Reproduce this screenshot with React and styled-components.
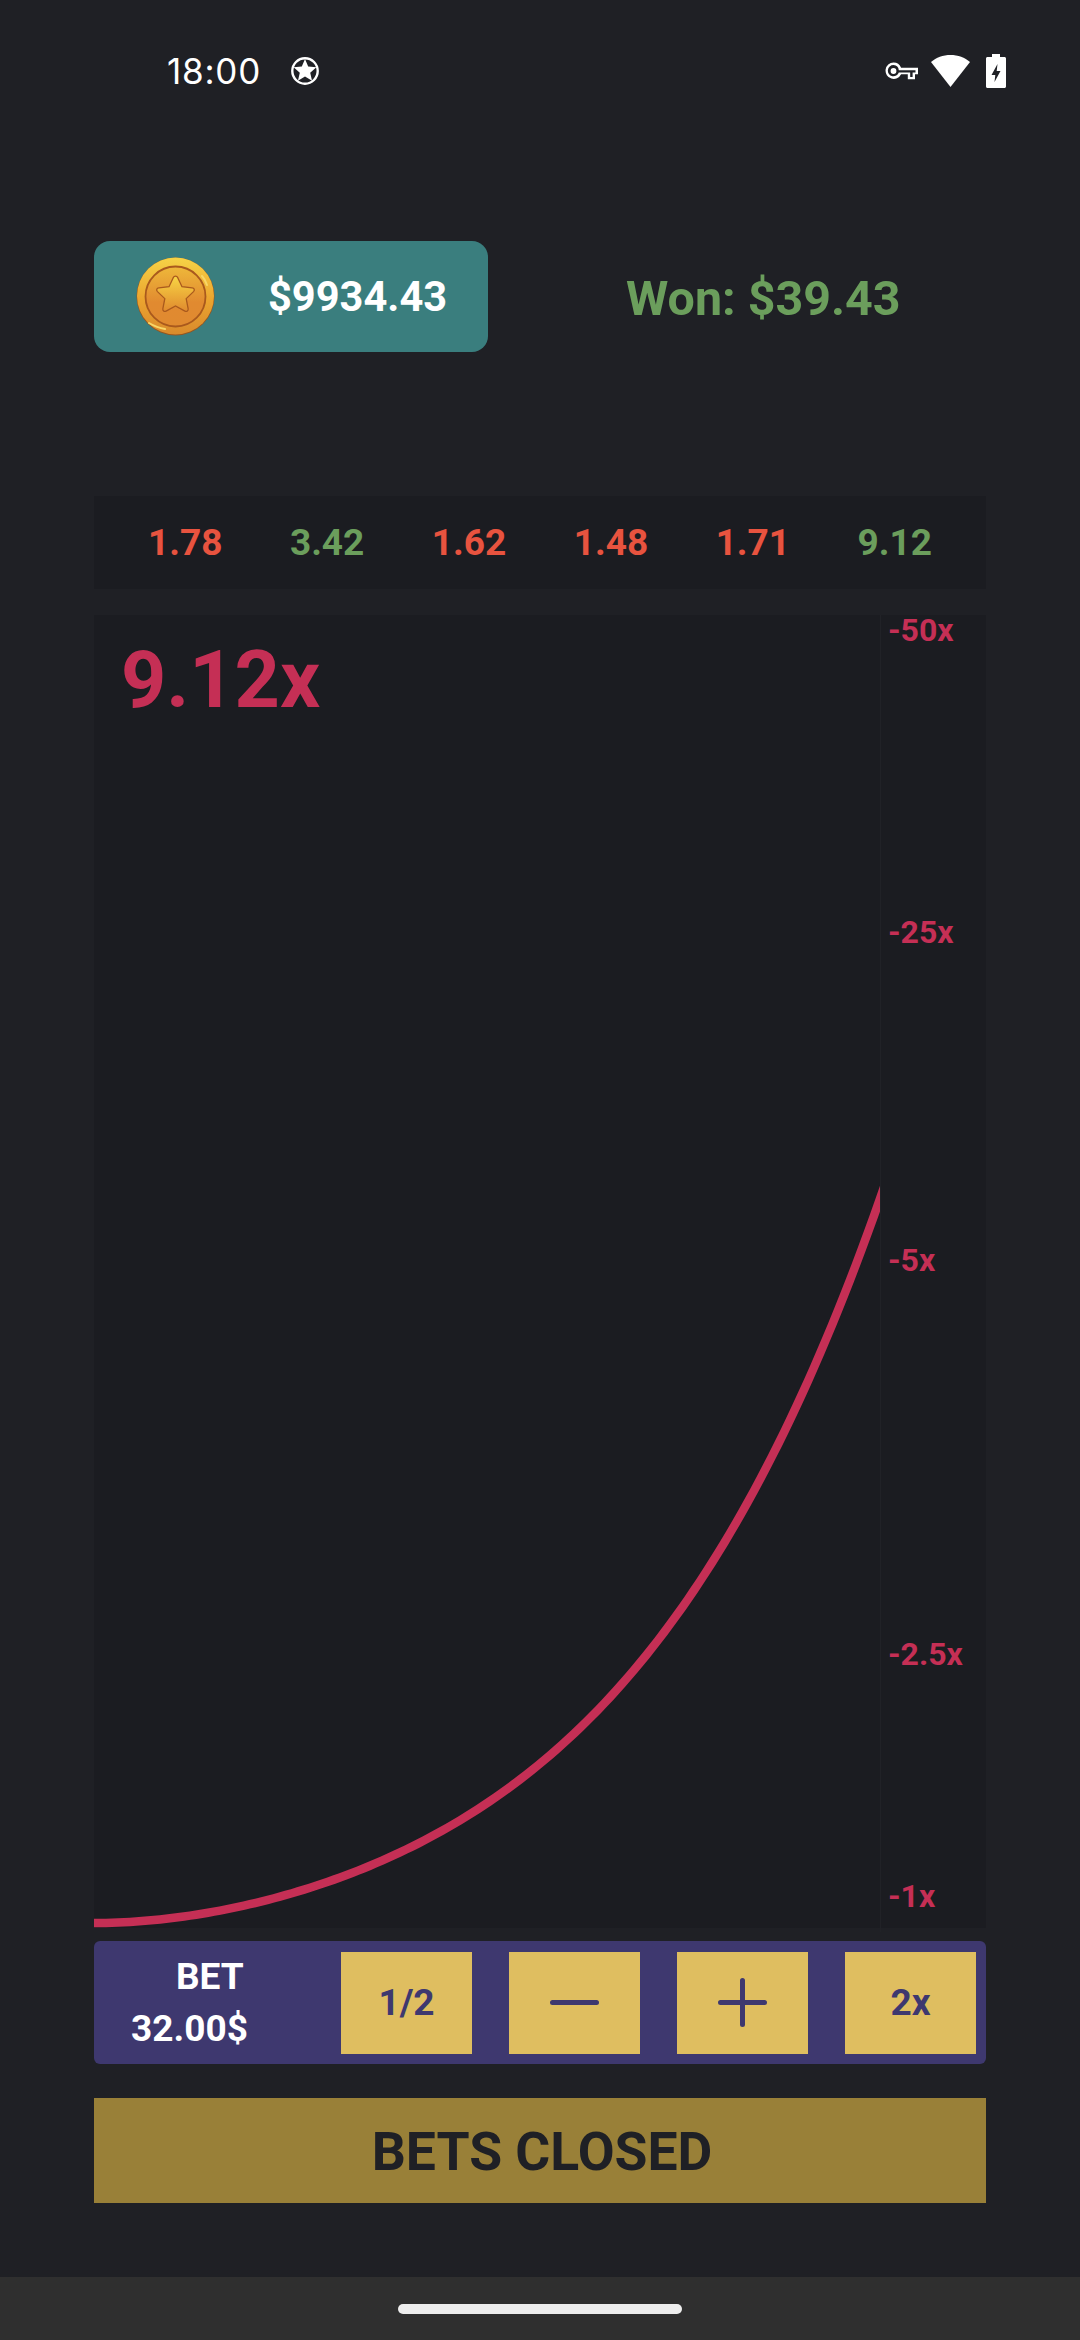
import React from 'react'
import styled, { createGlobalStyle } from 'styled-components'

const GlobalStyle = createGlobalStyle`
  html, body { margin: 0; padding: 0; height: 2340px; overflow: hidden; background: #1f2025; }
  * { box-sizing: border-box; }
`

const Page = styled.div`
  width: 1080px;
  height: 2340px;
  overflow: hidden;
  display: flex;
  flex-direction: column;
  background: #1f2025;
  font-family: Roboto, "Liberation Sans", sans-serif;
`
const StatusBar = styled.div`
  height: 142px;
  display: flex;
  align-items: center;
  padding: 0 74px 0 167px;
  color: #fff;
`
const Time = styled.span`
  font-family: Inter, Roboto, sans-serif;
  font-size: 35px;
  letter-spacing: 0.8px;
  margin-right: 30px;
`
const StatusIcons = styled.div`
  margin-left: auto;
  display: flex;
  align-items: center;
  gap: 13px;

  svg:last-child {
    margin-left: 3px;
  }
`
const Content = styled.div`
  flex: 1;
  display: flex;
  flex-direction: column;
  padding: 0 94px;
`
const TopRow = styled.div`
  margin-top: 99px;
  display: flex;
  align-items: center;
`
const Wallet = styled.div`
  width: 394px;
  height: 111px;
  border-radius: 16px;
  background: #3a7e7e;
  display: flex;
  align-items: center;
  padding-left: 42px;
  color: #fff;
  font-size: 41.6px;
  font-weight: 700;
`
const Balance = styled.span`
  margin-left: 53px;
`
const Won = styled.div`
  margin: 4px 0 0 138px;
  color: #6b9e5c;
  font-size: 48.4px;
  font-weight: 700;
`
const Ticker = styled.div`
  margin-top: 144px;
  height: 93px;
  background: #1b1c21;
  display: flex;
  align-items: center;
  justify-content: space-between;
  padding: 0 54px;
`
const Round = styled.span`
  font-size: 37px;
  font-weight: 700;
  color: ${props => (props.$won ? '#6b9e5c' : '#e8533f')};
`
const Chart = styled.div`
  margin-top: 26px;
  height: 1313px;
  background: #1b1c21;
  display: grid;
  grid-template-columns: 787px 1fr;
`
const Plot = styled.div`
  position: relative;
  border-right: 1px solid #212227;
`
const Multiplier = styled.div`
  position: absolute;
  top: 19px;
  left: 27px;
  font-size: 79px;
  font-weight: 700;
  color: #c52f55;
`
const Axis = styled.div`
  position: relative;
`
const Tick = styled.span`
  position: absolute;
  left: 7px;
  top: ${props => props.$y}px;
  transform: translateY(-50%);
  font-size: 32px;
  font-weight: 700;
  color: #c52f55;
`
const BetBar = styled.div`
  margin-top: 13px;
  height: 123px;
  border-radius: 6px;
  background: #3e386f;
  display: flex;
  align-items: center;
  padding-right: 10px;
`
const BetInfo = styled.div`
  width: 247px;
  padding-left: 37px;
  display: flex;
  flex-direction: column;
  color: #fff;
  font-size: 37px;
  font-weight: 700;
  line-height: 52px;
`
const BetLabel = styled.span`
  margin-left: 45px;
`
const BetButtons = styled.div`
  flex: 1;
  display: flex;
  justify-content: space-between;
`
const BetButton = styled.div`
  width: 131px;
  height: 102px;
  background: #dfbe60;
  color: #3e386f;
  font-size: 37px;
  font-weight: 700;
  display: flex;
  align-items: center;
  justify-content: center;
`
const ClosedButton = styled.div`
  margin-top: 34px;
  height: 105px;
  padding: 2px 0 0 4px;
  background: #998038;
  color: #1f2025;
  font-size: 53.5px;
  font-weight: 700;
  display: flex;
  align-items: center;
  justify-content: center;
`
const NavBar = styled.div`
  height: 63px;
  background: #2f2f2f;
  display: flex;
  align-items: center;
  justify-content: center;
`
const NavPill = styled.div`
  width: 284px;
  height: 10px;
  border-radius: 5px;
  background: #eeeeee;
`

const rounds = [
  { value: '1.78' },
  { value: '3.42', won: true },
  { value: '1.62' },
  { value: '1.48' },
  { value: '1.71' },
  { value: '9.12', won: true },
]

const ticks = [
  { label: '-50x', y: 15 },
  { label: '-25x', y: 317 },
  { label: '-5x', y: 645 },
  { label: '-2.5x', y: 1039 },
  { label: '-1x', y: 1281 },
]

// rise of the curve above its baseline at a given x in the plot
const curveY = x => 1308 - x * x * (8.649e-4 - 8.43e-7 * x + 1.57e-9 * x * x)

const curvePath = () => {
  let d = `M0 ${curveY(0)}`
  for (let x = 6; x <= 800; x += 6) {
    d += `L${x} ${curveY(x).toFixed(2)}`
  }
  return d
}

const StarBadge = () => (
  <svg width="28" height="28" viewBox="0 0 28 28">
    <circle cx="14" cy="14" r="12.7" fill="none" stroke="#fff" strokeWidth="2.4" />
    <path d="M14 2l3.200 7.550 8.200.750-6.200 5.400 1.850 8-7.050-4.200-7.050 4.200 1.850-8-6.200-5.400 8.200-.750z" fill="#fff" />
  </svg>
)

const KeyIcon = () => (
  <svg width="33" height="18" viewBox="0 0 33 18">
    <path
      fillRule="evenodd"
      fill="#fff"
      d="M8.500 0.500a8.200 8.200 0 0 1 7.600 5.200H33v6.600h-3v5h-7.200v-5h-6.700A8.200 8.200 0 1 1 8.500.5zm0 2.600a5.600 5.600 0 1 0 5.300 7.300h11.400v4.600h2.400v-4.600h2.900V8.200H13.800a5.600 5.600 0 0 0-5.300-5.100zm0 3a2.900 2.900 0 1 1 0 5.800 2.900 2.900 0 0 1 0-5.800z"
    />
  </svg>
)

const WifiIcon = () => (
  <svg width="39" height="32" viewBox="0 0 39 32">
    <path d="M19.500 0C12 0 5.200 2.600 0 7l19.500 25L39 7C33.800 2.600 27 0 19.500 0z" fill="#fff" />
  </svg>
)

const BatteryIcon = () => (
  <svg width="20" height="34" viewBox="0 0 20 34">
    <path
      fillRule="evenodd"
      fill="#fff"
      d="M6 0h8v3h4.500c.8 0 1.500.7 1.500 1.500v28c0 .8-.7 1.500-1.500 1.500h-17C.7 34 0 33.300 0 32.500v-28C0 3.700.7 3 1.500 3H6zM11.500 10l-6 11h3.800l-.8 7 6-11h-3.800z"
    />
  </svg>
)

const CoinIcon = () => (
  <svg width="79" height="79" viewBox="0 0 79 79">
    <defs>
      <linearGradient id="coinRim" x1="0" y1="0" x2="0" y2="1">
        <stop offset="0" stopColor="#f6d346" />
        <stop offset="0.55" stopColor="#eba42f" />
        <stop offset="1" stopColor="#d98a2c" />
      </linearGradient>
      <linearGradient id="coinFace" x1="0" y1="0" x2="0" y2="1">
        <stop offset="0" stopColor="#eeb83a" />
        <stop offset="0.6" stopColor="#e18a30" />
        <stop offset="1" stopColor="#e08a30" />
      </linearGradient>
      <linearGradient id="coinStar" x1="0" y1="0" x2="0" y2="1">
        <stop offset="0" stopColor="#f8d544" />
        <stop offset="1" stopColor="#e08a2e" />
      </linearGradient>
    </defs>
    <circle cx="39.5" cy="39.5" r="39" fill="#96551f" />
    <circle cx="39.5" cy="39" r="38.5" fill="url(#coinRim)" />
    <circle cx="39.5" cy="39.5" r="30" fill="url(#coinFace)" stroke="#a9591d" strokeWidth="1.8" />
    <path d="M66 19c3 3 4 6 5 9M13 66c5 3 9 5 16 6" fill="none" stroke="#f8d768" strokeWidth="2" strokeLinecap="round" />
    <path
      transform="translate(39.5 37) scale(1.08) translate(-39.5 -36)"
      d="M39.500 19.500c1 0 1.700.6 2.200 1.600l3.800 8.100 9.400 1.100c2 .3 2.700 2.100 1.300 3.500l-6.800 6.500 1.800 9.200c.4 2-1.300 3.300-3 2.300l-8.700-4.700-8.700 4.700c-1.700 1-3.400-.3-3-2.300l1.800-9.200-6.800-6.500c-1.400-1.400-.7-3.200 1.300-3.500l9.400-1.100 3.800-8.100c.5-1 1.200-1.600 2.200-1.600z"
      fill="url(#coinStar)"
      stroke="#a9591d"
      strokeWidth="1.2"
    />
  </svg>
)

const MinusIcon = () => (
  <svg width="49" height="49" viewBox="0 0 49 49">
    <path d="M2.500 24.500h44" stroke="#3e386f" strokeWidth="5" strokeLinecap="round" />
  </svg>
)

const PlusIcon = () => (
  <svg width="49" height="49" viewBox="0 0 49 49">
    <path d="M2.500 24.500h44M24.500 2.500v44" stroke="#3e386f" strokeWidth="5" strokeLinecap="round" />
  </svg>
)

const Curve = () => (
  <svg width="786" height="1313" viewBox="0 0 786 1313">
    <path d={curvePath()} fill="none" stroke="#c52f55" strokeWidth="8.5" />
  </svg>
)

const App = () => {
  return (
    <Page>
      <GlobalStyle />
      <StatusBar>
        <Time>18:00</Time>
        <StarBadge />
        <StatusIcons>
          <KeyIcon />
          <WifiIcon />
          <BatteryIcon />
        </StatusIcons>
      </StatusBar>
      <Content>
        <TopRow>
          <Wallet>
            <CoinIcon />
            <Balance>$9934.43</Balance>
          </Wallet>
          <Won>Won: $39.43</Won>
        </TopRow>
        <Ticker>
          {rounds.map(round => (
            <Round key={round.value} $won={round.won}>{round.value}</Round>
          ))}
        </Ticker>
        <Chart>
          <Plot>
            <Curve />
            <Multiplier>9.12x</Multiplier>
          </Plot>
          <Axis>
            {ticks.map(tick => (
              <Tick key={tick.label} $y={tick.y}>{tick.label}</Tick>
            ))}
          </Axis>
        </Chart>
        <BetBar>
          <BetInfo>
            <BetLabel>BET</BetLabel>
            <span>32.00$</span>
          </BetInfo>
          <BetButtons>
            <BetButton>1/2</BetButton>
            <BetButton><MinusIcon /></BetButton>
            <BetButton><PlusIcon /></BetButton>
            <BetButton>2x</BetButton>
          </BetButtons>
        </BetBar>
        <ClosedButton>BETS CLOSED</ClosedButton>
      </Content>
      <NavBar>
        <NavPill />
      </NavBar>
    </Page>
  )
}

export default App
